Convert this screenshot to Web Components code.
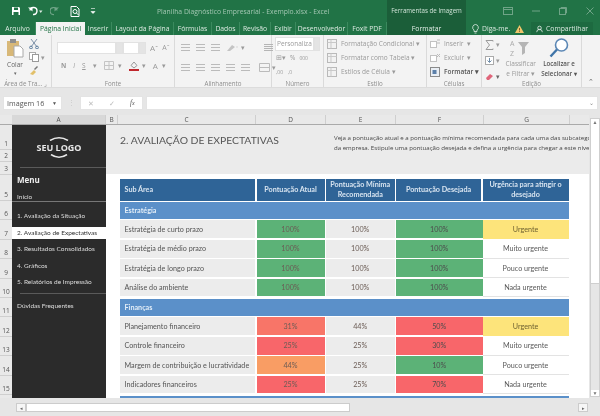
<!DOCTYPE html>
<html lang="pt">
<head>
<meta charset="utf-8">
<title>Planilha Diagnóstico Empresarial</title>
<style>
  html, body { margin: 0; padding: 0; width: 600px; height: 416px; overflow: hidden; background: #e6e6e6; }
  body { font-family: "Open Sans", "Liberation Sans", sans-serif; filter: blur(.3px); }
</style>
</head>
<body>
<xl-titlebar></xl-titlebar>
<xl-tabs></xl-tabs>
<xl-ribbon></xl-ribbon>
<xl-formula></xl-formula>
<xl-sheet></xl-sheet>
<xl-scrollbar></xl-scrollbar>

<script>
const FONT = '"Open Sans", "Liberation Sans", sans-serif';
const CELL_FONT = 'Lato, "Liberation Sans", sans-serif';

class XlTitlebar extends HTMLElement {
  constructor() {
    super();
    this.attachShadow({ mode: 'open' });
    this.shadowRoot.innerHTML = `
      <style>
        :host { display: flex; height: 22px; background: #217346; color: #b9d5c5; font: 6.800px ${FONT}; align-items: center; }
        :host > * { flex: none; }
        .qat { display: flex; align-items: center; gap: 7px; padding-left: 11px; width: 145px; box-sizing: border-box; }
        .title { width: 242px; padding-left: 12px; box-sizing: border-box; white-space: nowrap; opacity: .85; }
        .ctx { width: 79px; height: 100%; background: #1b5e39; color: #cfe3d7; text-align: center; line-height: 22px; white-space: nowrap; font-size: 6.200px; }
        .win { display: flex; gap: 19px; margin-left: 37px; align-items: center; opacity: .35; }
        svg { display: block; flex: none; }
      </style>
      <div class="qat">
        <svg width="10" height="10" viewBox="0 0 10 10"><path d="M1 1h7l1 1v7H1z" fill="#fff"/><rect x="3" y="1.500" width="4" height="2.500" fill="#217346"/><rect x="2.500" y="6" width="5" height="3" fill="#217346"/></svg>
        <svg width="15" height="10" viewBox="0 0 15 10"><path d="M2 4.500A3.500 3.500 0 1 1 5 8.500" fill="none" stroke="#fff" stroke-width="1.400"/><path d="M0 1.500h4.500v4z" fill="#fff"/><path d="M11 4.500h3.500L12.750 7z" fill="#dce9e1"/></svg>
        <svg width="13" height="10" viewBox="0 0 13 10" opacity=".35"><path d="M7 4.500A3.500 3.500 0 1 0 4 8.500" fill="none" stroke="#fff" stroke-width="1.200"/><path d="M9 1.500H4.500v4z" fill="#fff"/></svg>
        <svg width="10" height="11" viewBox="0 0 10 11"><path d="M1 .500h5.500L9 3v7.500H1z" fill="none" stroke="#fff"/><circle cx="5" cy="5.500" r="2" fill="none" stroke="#fff"/><path d="M6.500 7l2 2" stroke="#fff"/></svg>
        <svg width="6" height="8" viewBox="0 0 6 8" style="margin-left:3px"><path d="M1 1.500h4M1 4.500l2 2 2-2z" fill="#fff" stroke="#fff" stroke-width=".6"/></svg>
      </div>
      <div class="title">Planilha Diagnóstico Empresarial - Exemplo.xlsx - Excel</div>
      <div class="ctx">Ferramentas de Imagem</div>
      <div class="win">
        <svg width="10" height="8" viewBox="0 0 10 8"><rect x=".5" y=".5" width="9" height="7" fill="none" stroke="#fff"/><path d="M1 2.500h8" stroke="#fff"/></svg>
        <svg width="8" height="2" viewBox="0 0 8 2"><path d="M0 1h8" stroke="#fff"/></svg>
        <svg width="8" height="8" viewBox="0 0 8 8"><rect x=".5" y="1.500" width="6" height="6" fill="none" stroke="#fff"/><path d="M2 1.500v-1h5.500v5.500h-1" fill="none" stroke="#fff"/></svg>
        <svg width="8" height="8" viewBox="0 0 8 8"><path d="M.5.500l7 7M7.500.500l-7 7" stroke="#fff"/></svg>
      </div>`;
  }
}

class XlTabs extends HTMLElement {
  constructor() {
    super();
    this.attachShadow({ mode: 'open' });
    const tabs = [['Arquivo', 36], ['Página Inicial', 49], ['Inserir', 27], ['Layout da Página', 62], ['Fórmulas', 38], ['Dados', 28], ['Revisão', 31], ['Exibir', 25], ['Desenvolvedor', 52], ['Foxit PDF', 39]];
    this.shadowRoot.innerHTML = `
      <style>
        :host { display: flex; height: 13px; background: #217346; color: #d9e8df; font: 6.800px/13px ${FONT}; white-space: nowrap; }
        :host > * { flex: none; }
        .tab { text-align: center; box-sizing: border-box; border-right: 1px solid #3b8a5e; }
        .tab:first-child, .tab.on { border-right: 0; }
        .tab.on { background: #f3f3f3; color: #217346; }
        .ctx { width: 79px; background: #1b5e39; text-align: center; color: #e3efe8; }
        .gap { width: 6px; }
        .tell { display: flex; align-items: center; gap: 3px; width: 59px; }
        .share { display: flex; align-items: center; gap: 3px; background: #1d6a40; padding: 0 5px; width: 62px; box-sizing: border-box; }
      </style>
      ${tabs.map(([t, w], i) => `<div class="tab${i === 1 ? ' on' : ''}" style="width:${w}px">${t}</div>`).join('')}
      <div class="ctx">Formatar</div>
      <div class="gap"></div>
      <div class="tell">
        <svg width="7" height="10" viewBox="0 0 7 10"><path d="M3.500.5a3 3 0 0 1 1.500 5.500v1.500H2V6A3 3 0 0 1 3.500.5zM2.500 9h2" fill="none" stroke="#e3efe8" stroke-width=".8"/></svg>
        <span>Diga-me.</span>
        <svg width="9" height="8" viewBox="0 0 9 8" style="margin-left:2px"><path d="M4.500 0L9 8H0z" fill="#f0c56c"/><path d="M4.500 3v2.500M4.500 6.200v.8" stroke="#5a4a20" stroke-width=".8"/></svg>
      </div>
      <div class="share">
        <svg width="10" height="10" viewBox="0 0 10 10"><circle cx="5" cy="3.500" r="2.500" fill="none" stroke="#fff"/><path d="M1 9.500a4 4 0 0 1 8 0" fill="none" stroke="#fff"/></svg>
        <span>Compartilhar</span>
      </div>`;
  }
}

// one group of the ribbon: its content in the slot, its name under it
class XlGroup extends HTMLElement {
  constructor() {
    super();
    this.attachShadow({ mode: 'open' });
    this.shadowRoot.innerHTML = `
      <style>
        :host { display: flex; flex-direction: column; box-sizing: border-box; height: 100%; border-right: 1px solid #dadada; flex: none; }
        .body { flex: 1; min-height: 0; padding: 3px 3px 0; box-sizing: border-box; }
        .name { height: 7px; line-height: 7px; font-size: 6.200px; text-align: center; color: #8e8e8e; white-space: nowrap; }
      </style>
      <div class="body"><slot></slot></div>
      <div class="name"></div>`;
  }
  connectedCallback() {
    this.style.width = this.getAttribute('w') + 'px';
    this.shadowRoot.querySelector('.name').textContent = this.getAttribute('name');
  }
}
customElements.define('xl-group', XlGroup);

class XlRibbon extends HTMLElement {
  constructor() {
    super();
    this.attachShadow({ mode: 'open' });
    this.shadowRoot.innerHTML = `
      <style>
        :host { display: flex; height: 53px; background: #f3f3f3; color: #9a9a9a; font: 6.500px ${FONT}; border-bottom: 1px solid #dcdcdc; box-sizing: border-box; }
        svg { display: block; flex: none; }
        .row { display: flex; align-items: center; gap: 4px; height: 13px; white-space: nowrap; }
        .box { background: #fff; border: 1px solid #e2e2e2; box-sizing: border-box; height: 12px; }
        .colar { display: flex; gap: 2px; }
        .colar .big { display: flex; flex-direction: column; align-items: center; width: 24px; color: #666; line-height: 8px; gap: 1px; }
        .colar .small { display: flex; flex-direction: column; gap: 3px; padding-top: 1px; }
        .ln { width: 9px; height: 8px; background: repeating-linear-gradient(#bbb 0 1px, transparent 1px 3px); flex: none; }
        .styl { display: flex; flex-direction: column; gap: 1px; }
        .bold { color: #555; font-weight: 600; }
        .edit { display: flex; gap: 3px; }
        .edit .col { display: flex; flex-direction: column; align-items: center; line-height: 9.500px; text-align: center; white-space: nowrap; }
        .edit .loc { color: #555; font-weight: 600; font-size: 6.200px; }
        .up { flex: 1; display: flex; align-items: flex-end; justify-content: center; padding-bottom: 1px; color: #666; }
      </style>
      <xl-group name="Área de Tra... ⌟" w="52">
        <div class="colar">
          <div class="big">
            <svg width="18" height="20" viewBox="0 0 18 20"><rect x="1" y="3" width="12" height="15" fill="#d8b878"/><rect x="4" y="1" width="6" height="4" fill="#8f8f8f"/><path d="M8 8h6l3 3v8H8z" fill="#fff" stroke="#aaa"/></svg>
            <span style="margin-top:2px">Colar</span><span style="font-size:4.500px;line-height:6px">▾</span>
          </div>
          <div class="small">
            <svg width="10" height="10" viewBox="0 0 10 10"><path d="M2 0l6 8M8 0L2 8" stroke="#7b8fa6" stroke-width="1"/><circle cx="2" cy="8.500" r="1.400" fill="none" stroke="#5d7d9d"/><circle cx="8" cy="8.500" r="1.400" fill="none" stroke="#5d7d9d"/></svg>
            <div class="row" style="gap:2px;height:10px"><svg width="10" height="10" viewBox="0 0 10 10"><rect x=".5" y=".5" width="6" height="7" fill="#fff" stroke="#aaa"/><rect x="3.500" y="2.500" width="6" height="7" fill="#fff" stroke="#999"/></svg><span>▾</span></div>
            <svg width="10" height="10" viewBox="0 0 10 10"><path d="M1 9l4-4 2 2-3 3z" fill="#e2c069"/><path d="M5 4l3-3 1 1-3 3z" fill="#777"/></svg>
          </div>
        </div>
      </xl-group>
      <xl-group name="Fonte" w="123">
        <div class="row" style="gap:0;margin:3px 0 0 2px">
          <div class="box" style="width:59px"></div><div class="box" style="width:7px;background:#e4e4e4"></div>
          <div class="box" style="width:16px"></div><div class="box" style="width:7px;background:#e4e4e4"></div>
          <span style="margin-left:4px;font-size:8px">Aˆ</span><span style="margin-left:4px;font-size:7px">Aˇ</span>
        </div>
        <div class="row" style="gap:7px;margin-top:5px;padding-left:6px">
          <b>N</b><i>I</i><u>S</u><span>▾</span>
          <svg width="10" height="9" viewBox="0 0 10 9"><path d="M.5.5h9v8h-9zM5 .5v8M.5 4.500h9" fill="none" stroke="#c4c4c4"/></svg>
          <span style="margin-left:-3px">▾</span>
          <svg width="10" height="10" viewBox="0 0 10 10"><path d="M5 1l3 3.500-3 2.500-3-2.500z" fill="none" stroke="#999"/><rect y="8" width="10" height="2" fill="#c0272d"/></svg>
          <span style="margin-left:-4px">▾</span><span style="font-size:8px">A</span><span style="margin-left:-3px">▾</span>
        </div>
      </xl-group>
      <xl-group name="Alinhamento" w="97">
        <div class="row" style="gap:6px;padding-left:3px;margin-top:3px">
          <i class="ln"></i><i class="ln"></i><i class="ln"></i>
          <svg width="12" height="9" viewBox="0 0 12 9"><path d="M1 8l5-6 3 2-5 4z" fill="#c4c4c4"/><path d="M10.500 4l1 0" stroke="#bbb"/></svg>
          <span style="margin-left:-3px">▾</span>
          <i class="ln" style="margin-left:13px;background:repeating-linear-gradient(#b5b5b5 0 1px,transparent 1px 2px)"></i>
        </div>
        <div class="row" style="gap:6px;padding-left:3px;margin-top:7px">
          <i class="ln"></i><i class="ln"></i><i class="ln"></i><i class="ln"></i><i class="ln"></i>
          <svg width="11" height="9" viewBox="0 0 11 9" style="margin-left:3px"><path d="M.5.5h10v8H.5zM.5 4.500h10" fill="none" stroke="#bbb"/></svg>
          <span style="margin-left:-4px">▾</span>
        </div>
      </xl-group>
      <xl-group name="Número" w="52">
        <div class="row" style="gap:0;margin-top:-1px"><div class="box" style="width:40px;height:14px;line-height:12px;padding-left:1px;overflow:hidden">Personaliza</div><div class="box" style="width:6px;height:14px;background:#e4e4e4"></div></div>
        <div class="row" style="gap:4px;margin-top:1px;padding-left:1px"><span>⊞▾</span><span>%</span><span style="font-size:5px">000</span></div>
        <div class="row" style="gap:5px;margin-top:1px;padding-left:1px;font-size:5px"><span>,00</span><span>,0</span></div>
      </xl-group>
      <xl-group name="Estilo" w="103">
        <div class="styl" style="margin-top:-1px">
          ${['Formatação Condicional', 'Formatar como Tabela', 'Estilos de Célula'].map(t => `
          <div class="row"><svg width="10" height="10" viewBox="0 0 10 10"><rect x=".5" y=".5" width="9" height="9" fill="#f2f2f2" stroke="#b9b9b9"/><path d="M.5 3.500h9M4 .5v9" stroke="#c9c9c9"/></svg><span>${t} ▾</span></div>`).join('')}
        </div>
      </xl-group>
      <xl-group name="Células" w="55">
        <div class="styl" style="margin-top:-1px">
          <div class="row"><svg width="10" height="10" viewBox="0 0 10 10"><rect x=".5" y="2.500" width="6" height="6" fill="#fff" stroke="#c2c2c2"/><path d="M7 1h3M7 4h3" stroke="#bbb"/></svg><span>Inserir &nbsp;▾</span></div>
          <div class="row"><svg width="10" height="10" viewBox="0 0 10 10"><rect x=".5" y="2.500" width="6" height="6" fill="#fff" stroke="#c2c2c2"/><path d="M7 1l3 3M10 1L7 4" stroke="#bbb"/></svg><span>Excluir &nbsp;▾</span></div>
          <div class="row"><svg width="10" height="10" viewBox="0 0 10 10"><rect x=".5" y=".5" width="9" height="9" fill="#e9eef4" stroke="#8a8a8a"/><rect x="2.500" y="3" width="4" height="4" fill="#5b7fa8"/></svg><span class="bold">Formatar ▾</span></div>
        </div>
      </xl-group>
      <xl-group name="Edição" w="100">
        <div class="edit">
          <div class="styl" style="width:17px;gap:3px">
            <div class="row" style="gap:2px"><svg width="9" height="10" viewBox="0 0 9 10"><path d="M8 1.500V.5H1l3.500 4.500L1 9.500h7v-1" fill="none" stroke="#9b9b9b"/></svg><span>▾</span></div>
            <div class="row" style="gap:2px"><svg width="9" height="9" viewBox="0 0 9 9"><rect x=".5" y=".5" width="8" height="8" fill="#fff" stroke="#aaa"/><path d="M4.500 2v4M2.500 4.500l2 2 2-2" fill="none" stroke="#6f8ca8"/></svg><span>▾</span></div>
            <div class="row" style="gap:2px"><svg width="9" height="8" viewBox="0 0 9 8"><path d="M1 5l4-4 3 2-4 4H2z" fill="#e0657a"/></svg><span style="color:#666">▾</span></div>
          </div>
          <div class="col" style="width:33px">
            <svg width="21" height="20" viewBox="0 0 21 20"><text x="0" y="8" font-size="7" fill="#aaa" font-family="Open Sans">A</text><text x="0" y="18" font-size="7" fill="#aaa" font-family="Open Sans">Z</text><path d="M8 4h11l-4 5v6l-3 2V9z" fill="#b5b5b5"/></svg>
            <span style="margin-top:1px">Classificar</span><span>e Filtrar ▾</span>
          </div>
          <div class="col loc" style="width:39px">
            <svg width="20" height="20" viewBox="0 0 20 20"><circle cx="12.500" cy="7" r="6" fill="#fff" stroke="#5b87b5" stroke-width="1.600"/><path d="M8 11.500l-6.500 7" stroke="#3f74a8" stroke-width="2.400"/></svg>
            <span style="margin-top:1px">Localizar e</span><span>Selecionar ▾</span>
          </div>
        </div>
      </xl-group>
      <div class="up">⌃</div>`;
  }
}

class XlFormula extends HTMLElement {
  constructor() {
    super();
    this.attachShadow({ mode: 'open' });
    this.shadowRoot.innerHTML = `
      <style>
        :host { display: flex; height: 27px; box-sizing: border-box; padding: 8px 2px 5px 3px; align-items: stretch; font: 7.200px ${FONT}; color: #555; }
        .name { width: 59px; background: #fff; border: 1px solid #e4e4e4; box-sizing: border-box; display: flex; align-items: center; justify-content: space-between; padding: 0 4px 0 3px; }
        .dots { width: 18px; text-align: center; color: #c9c9c9; line-height: 12px; }
        .fx { width: 63px; background: #fff; border: 1px solid #e4e4e4; box-sizing: border-box; display: flex; align-items: center; justify-content: space-around; color: #bbb; }
        .fx i { color: #555; font-family: "Liberation Serif", serif; }
        .bar { flex: 1; margin-left: 3px; background: #fff; border: 1px solid #e4e4e4; box-sizing: border-box; display: flex; justify-content: flex-end; align-items: center; padding-right: 3px; color: #888; font-size: 6px; }
      </style>
      <div class="name"><span>Imagem 16</span><span style="font-size:5px">▼</span></div>
      <div class="dots">⋮</div>
      <div class="fx"><span>✕</span><span>✓</span><i>f<small>x</small></i></div>
      <div class="bar">⌄</div>`;
  }
}

class XlMenu extends HTMLElement {
  constructor() {
    super();
    this.attachShadow({ mode: 'open' });
    const items = ['1. Avaliação da Situação', '2. Avaliação de Expectativas', '3. Resultados Consolidados', '4. Gráficos', '5. Relatórios de Impressão'];
    this.shadowRoot.innerHTML = `
      <style>
        :host { display: block; background: #2b2b2b; color: #ddd; font: 6.500px/12px ${CELL_FONT}; height: 100%; overflow: hidden; white-space: nowrap; }
        .logo { height: 42px; display: flex; flex-direction: column; align-items: center; justify-content: center; gap: 1px; padding-top: 3px; box-sizing: border-box; color: #e8e8e8; }
        .logo b { font: 700 9px/11px ${FONT}; }
        .logo svg { display: block; }
        .rule { height: 1px; background: #5a5a5a; margin-left: 8px; }
        .head { font: 700 8px/12px ${FONT}; padding: 6px 0 0 5px; height: 19px; box-sizing: border-box; color: #eee; }
        .start { padding-left: 5px; height: 14px; line-height: 19px; }
        .line { height: 1px; background: #777; }
        .item { padding-left: 5px; height: 12px; margin-bottom: 4.500px; }
        .item.first { margin-top: 8px; }
        .item.on { background: #fff; color: #333; }
        .rule.low { margin: 1px 0 6px 8px; }
      </style>
      <div class="logo">
        <svg width="22" height="5" viewBox="0 0 22 5"><path d="M2 4.500Q11-1 20 4.500" fill="none" stroke="#e8e8e8" stroke-width="1.600"/></svg>
        <b>SEU LOGO</b>
        <svg width="22" height="5" viewBox="0 0 22 5"><path d="M3 .5Q11 6 19 .5" fill="none" stroke="#e8e8e8" stroke-width="1.600"/></svg>
      </div>
      <div class="rule"></div>
      <div class="head">Menu</div>
      <div class="start">Início</div>
      <div class="line"></div>
      ${items.map((t, i) => `<div class="item${i === 0 ? ' first' : ''}${i === 1 ? ' on' : ''}">${t}</div>`).join('')}
      <div class="rule low"></div>
      <div class="item">Dúvidas Frequentes</div>`;
  }
}
customElements.define('xl-menu', XlMenu);

class XlSheet extends HTMLElement {
  constructor() {
    super();
    this.attachShadow({ mode: 'open' });
    const G = '#5cb277', R = '#f8666a', O = '#f99d64', S = '#f87568', E = '#ececec';
    const sections = [
      ['Estratégia', [
        ['Estratégia de curto prazo', ['100%', G], '100%', ['100%', G], 'Urgente'],
        ['Estratégia de médio prazo', ['100%', G], '100%', ['100%', G], 'Muito urgente'],
        ['Estratégia de longo prazo', ['100%', G], '100%', ['100%', G], 'Pouco urgente'],
        ['Análise do ambiente', ['100%', G], '100%', ['100%', G], 'Nada urgente'],
      ]],
      ['Finanças', [
        ['Planejamento financeiro', ['31%', S], '44%', ['50%', R], 'Urgente'],
        ['Controle financeiro', ['25%', R], '25%', ['30%', R], 'Muito urgente'],
        ['Margem de contribuição e lucratividade', ['44%', O], '25%', ['10%', G], 'Pouco urgente'],
        ['Indicadores financeiros', ['25%', R], '25%', ['70%', R], 'Nada urgente'],
      ]],
    ];
    const rowLabels = [['1', 25], ['2', 12], ['3', 13], ['5', 26]];
    for (let n = 6; n <= 15; n++) rowLabels.push([String(n), 19.4]);
    const cols = [['A', 94], ['B', 12], ['C', 138], ['D', 70], ['E', 70], ['F', 88], ['G', 86]];

    const dataRow = ([name, cur, min, want, urg]) => `
      <div class="c name">${name}</div>
      <div class="c" style="background:${cur[1]}">${cur[0]}</div>
      <div class="c" style="background:${E}">${min}</div>
      <div class="c dark" style="background:${want[1]}">${want[0]}</div>
      <div class="c urg${urg === 'Urgente' ? ' y' : ''}">${urg}</div>`;

    this.shadowRoot.innerHTML = `
      <style>
        :host { display: grid; grid-template-columns: 589px 10px; column-gap: 1px; height: 283px; font: 7.200px ${CELL_FONT}; color: #555; }
        .main { display: grid; grid-template-columns: 12px 1fr; grid-template-rows: 10px 1fr; min-width: 0; background: #fff; }
        .corner { background: #e9e9e9; border-bottom: 1px solid #aaa; box-sizing: border-box; }
        .colhead { display: flex; background: #e9e9e9; border-bottom: 1px solid #aaa; box-sizing: border-box; font: 6.500px/9px ${FONT}; color: #555; }
        .colhead div { text-align: center; border-right: 1px solid #cfcfcf; box-sizing: border-box; }
        .colhead .sel { background: #d8d8d8; }
        .rowhead { background: #e9e9e9; display: flex; flex-direction: column; font: 6.500px ${FONT}; overflow: hidden; }
        .rowhead div { display: flex; align-items: flex-end; justify-content: center; border-bottom: 1px solid #cfcfcf; box-sizing: border-box; padding-bottom: 1px; flex: none; }
        .body { display: grid; grid-template-columns: 94px 1fr; min-width: 0; height: 273px; overflow: hidden; }
        .page { min-width: 0; display: flex; flex-direction: column; overflow: hidden; }
        .banner { height: 49px; flex: none; background: #ebebeb; display: grid; grid-template-columns: 228px 1fr; box-sizing: border-box; }
        .banner h1 { margin: 0; padding: 8px 0 0 14px; font: 400 10.400px/14px ${CELL_FONT}; color: #555; white-space: nowrap; }
        .banner p { margin: 0; padding: 8px 0 0 0; font: 6.100px/9.500px ${FONT}; color: #444; white-space: nowrap; overflow: hidden; }
        .grid { display: grid; grid-template-columns: 137px 69.500px 70px 86.500px 86px; grid-template-rows: 22px; grid-auto-rows: 19.400px; margin: 5px 0 0 13.500px; width: 452px; }
        .th { background: #2f6497; color: #d8e4f0; font-weight: 700; display: flex; align-items: center; justify-content: center; text-align: center; line-height: 10px; margin: 0 1.500px 0 0; }
        .th.l { justify-content: flex-start; padding-left: 5px; }
        .sec { grid-column: 1 / -1; background: #5b90c9; color: #e2edf7; font-weight: 700; display: flex; align-items: center; padding-left: 5px; margin: 1px 0 1.500px; }
        .c { display: flex; align-items: center; justify-content: center; margin: 0 1.500px 1.500px 0; color: #6b5c55; white-space: nowrap; }
        .c.name { justify-content: flex-start; padding-left: 5px; background: #ececec; color: #555; overflow: hidden; }
        .c.dark { color: #4d4d4d; margin-right: 0; }
        .c.urg { margin: 0 0 .5px; border-bottom: 1px solid #e3e3e3; color: #5a5a5a; }
        .c.urg.y { background: #fde47b; color: #6f6232; border: 0; }
        .vscroll { background: #fff; border: 1px solid #cfcfcf; box-sizing: border-box; margin-top: 3px; height: 279px; display: flex; flex-direction: column; justify-content: space-between; align-items: center; font-size: 5px; color: #777; }
        .vscroll .rest { flex: 1; width: 100%; display: flex; flex-direction: column; }
        .vscroll .thumb { flex: 0 0 158px; border-bottom: 1px solid #cfcfcf; }
        .vscroll .track { flex: 1; background: #e6e6e6; }
      </style>
      <div class="main">
        <div class="corner"></div>
        <div class="colhead">${cols.map(([c, w]) => `<div class="${c === 'A' ? 'sel' : ''}" style="width:${w}px">${c}</div>`).join('')}</div>
        <div class="rowhead">${rowLabels.map(([n, h]) => `<div style="height:${h}px">${n}</div>`).join('')}</div>
        <div class="body">
          <xl-menu></xl-menu>
          <div class="page">
            <div class="banner">
              <h1>2. AVALIAÇÃO DE EXPECTATIVAS</h1>
              <p>Veja a pontuação atual e a pontuação mínima recomendada para cada uma das subcategorias<br>da empresa. Estipule uma pontuação desejada e defina a urgência para chegar a este nível.</p>
            </div>
            <div class="grid">
              <div class="th l">Sub Área</div><div class="th">Pontuação Atual</div><div class="th">Pontuação Mínima<br>Recomendada</div><div class="th">Pontuação Desejada</div><div class="th" style="margin-right:0">Urgência para atingir o<br>desejado</div>
              ${sections.map(([title, rows]) => `<div class="sec">${title}</div>${rows.map(dataRow).join('')}`).join('')}
              <div class="sec"></div>
            </div>
          </div>
        </div>
      </div>
      <div class="vscroll"><span>▲</span><div class="rest"><div class="thumb"></div><div class="track"></div></div><span>▼</span></div>`;
  }
}

class XlScrollbar extends HTMLElement {
  constructor() {
    super();
    this.attachShadow({ mode: 'open' });
    this.shadowRoot.innerHTML = `
      <style>
        :host { display: flex; align-items: center; height: 15px; padding: 4px 0 0 16px; box-sizing: border-box; font-size: 5px; color: #666; }
        .btn { width: 10px; height: 9px; background: #f6f6f6; border: 1px solid #ccc; box-sizing: border-box; display: flex; align-items: center; justify-content: center; flex: none; }
        .thumb { width: 324px; height: 9px; background: #fff; border: 1px solid #ccc; box-sizing: border-box; flex: none; }
        .track { width: 228px; flex: none; }
      </style>
      <div class="btn">◂</div><div class="thumb"></div><div class="track"></div><div class="btn">▸</div>`;
  }
}

customElements.define('xl-titlebar', XlTitlebar);
customElements.define('xl-tabs', XlTabs);
customElements.define('xl-ribbon', XlRibbon);
customElements.define('xl-formula', XlFormula);
customElements.define('xl-sheet', XlSheet);
customElements.define('xl-scrollbar', XlScrollbar);
</script>
</body>
</html>
